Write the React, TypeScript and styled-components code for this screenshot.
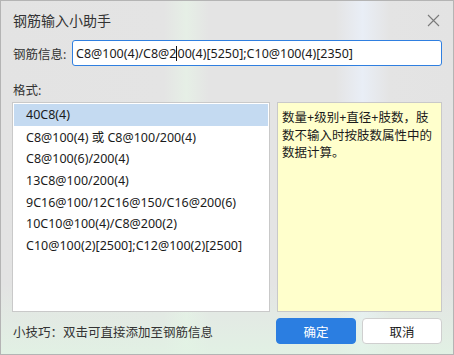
import React from 'react';
import styled, { createGlobalStyle } from 'styled-components';

const GlobalStyle = createGlobalStyle`
  html, body {
    margin: 0;
    padding: 0;
    background: #e4e4e4;
  }
  * {
    box-sizing: border-box;
  }
`;

const fontStack = `"Noto Sans", "Noto Sans CJK SC", sans-serif`;

const Window = styled.div`
  width: 454px;
  height: 355px;
  border: 1px solid #b4b4b4;
  background:
    linear-gradient(to bottom, rgba(228, 228, 228, 0) 80%, rgba(225, 244, 228, 0.8) 100%),
    linear-gradient(to right, #e3e3e3 0%, #e4e4e4 36%, #e6efe6 41%, #e4e4e4 46%, #e4e4e4 74%, #e9eef6 80%, #e4e4e4 86%, #e3e3e3 100%);
  font-family: ${fontStack};
  font-size: 12.5px;
  color: #1b1b1b;
  display: flex;
  flex-direction: column;
  padding: 0 11px 0 11px;
`;

const TitleBar = styled.div`
  height: 38px;
  display: flex;
  align-items: center;
  justify-content: space-between;
  padding-left: 1px;
`;

const Title = styled.div`
  font-size: 14px;
  color: #333;
`;

const CloseButton = styled.div`
  width: 14px;
  height: 14px;
  margin-right: 2px;
  display: flex;
  align-items: center;
  justify-content: center;
  color: #7a7a7a;
`;

const FieldRow = styled.div`
  display: flex;
  align-items: center;
  height: 26px;
  margin-top: 1px;
`;

const Label = styled.div`
  width: 60px;
  padding-left: 1px;
  color: #333;
`;

const Field = styled.div`
  flex: 1;
  height: 26px;
  border: 1px solid #2f7fe0;
  border-radius: 3px;
  background: #fff;
  display: flex;
  align-items: center;
  padding-left: 3px;
  white-space: pre;
  color: #1b1b1b;
`;

const Caret = styled.span`
  display: inline-block;
  width: 1px;
  height: 15px;
  background: #111;
  vertical-align: middle;
`;

const SectionLabel = styled.div`
  margin-top: 11px;
  height: 25px;
  padding-left: 1px;
  display: flex;
  align-items: center;
  color: #333;
`;

const Panels = styled.div`
  display: flex;
  gap: 7px;
  height: 210px;
`;

const List = styled.div`
  width: 258px;
  border: 1px solid #c9c9c9;
  background: #fff;
  padding: 1px;
  display: flex;
  flex-direction: column;
`;

const Item = styled.div<{ $selected?: boolean }>`
  height: 21.8px;
  display: flex;
  align-items: center;
  padding-left: 12px;
  background: ${p => (p.$selected ? '#c4daf1' : 'transparent')};
  white-space: nowrap;
`;

const Note = styled.div`
  flex: 1;
  border: 1px solid #c9c9c9;
  background: #ffffcc;
  padding: 6px 8px 0 4px;
  line-height: 17.5px;
`;

const Footer = styled.div`
  display: flex;
  align-items: center;
  margin-top: 6px;
  height: 26px;
`;

const Tip = styled.div`
  flex: 1;
  padding-left: 1px;
  color: #333;
`;

const Button = styled.button<{ $primary?: boolean }>`
  width: 80px;
  height: 26px;
  margin-left: 6px;
  border-radius: 4px;
  font-family: ${fontStack};
  font-size: 12.5px;
  cursor: pointer;
  border: 1px solid ${p => (p.$primary ? '#2b7ee1' : '#cfcfcf')};
  background: ${p => (p.$primary ? '#2b7ee1' : '#fff')};
  color: ${p => (p.$primary ? '#fff' : '#1b1b1b')};
  padding: 0;
`;

const formats = [
  '40C8(4)',
  'C8@100(4) 或 C8@100/200(4)',
  'C8@100(6)/200(4)',
  '13C8@100/200(4)',
  '9C16@100/12C16@150/C16@200(6)',
  '10C10@100(4)/C8@200(2)',
  'C10@100(2)[2500];C12@100(2)[2500]',
];

export default function App() {
  return (
    <>
      <GlobalStyle />
      <Window>
        <TitleBar>
          <Title>钢筋输入小助手</Title>
          <CloseButton>
            <svg width="13" height="13" viewBox="0 0 13 13">
              <path d="M1 1L12 12M12 1L1 12" stroke="currentColor" strokeWidth="1.1" fill="none" />
            </svg>
          </CloseButton>
        </TitleBar>
        <FieldRow>
          <Label>钢筋信息:</Label>
          <Field>
            C8@100(4)/C8@2<Caret />00(4)[5250];C10@100(4)[2350]
          </Field>
        </FieldRow>
        <SectionLabel>格式:</SectionLabel>
        <Panels>
          <List>
            {formats.map((f, i) => (
              <Item key={f} $selected={i === 0}>{f}</Item>
            ))}
          </List>
          <Note>数量+级别+直径+肢数，肢数不输入时按肢数属性中的数据计算。</Note>
        </Panels>
        <Footer>
          <Tip>小技巧：双击可直接添加至钢筋信息</Tip>
          <Button $primary>确定</Button>
          <Button>取消</Button>
        </Footer>
      </Window>
    </>
  );
}
